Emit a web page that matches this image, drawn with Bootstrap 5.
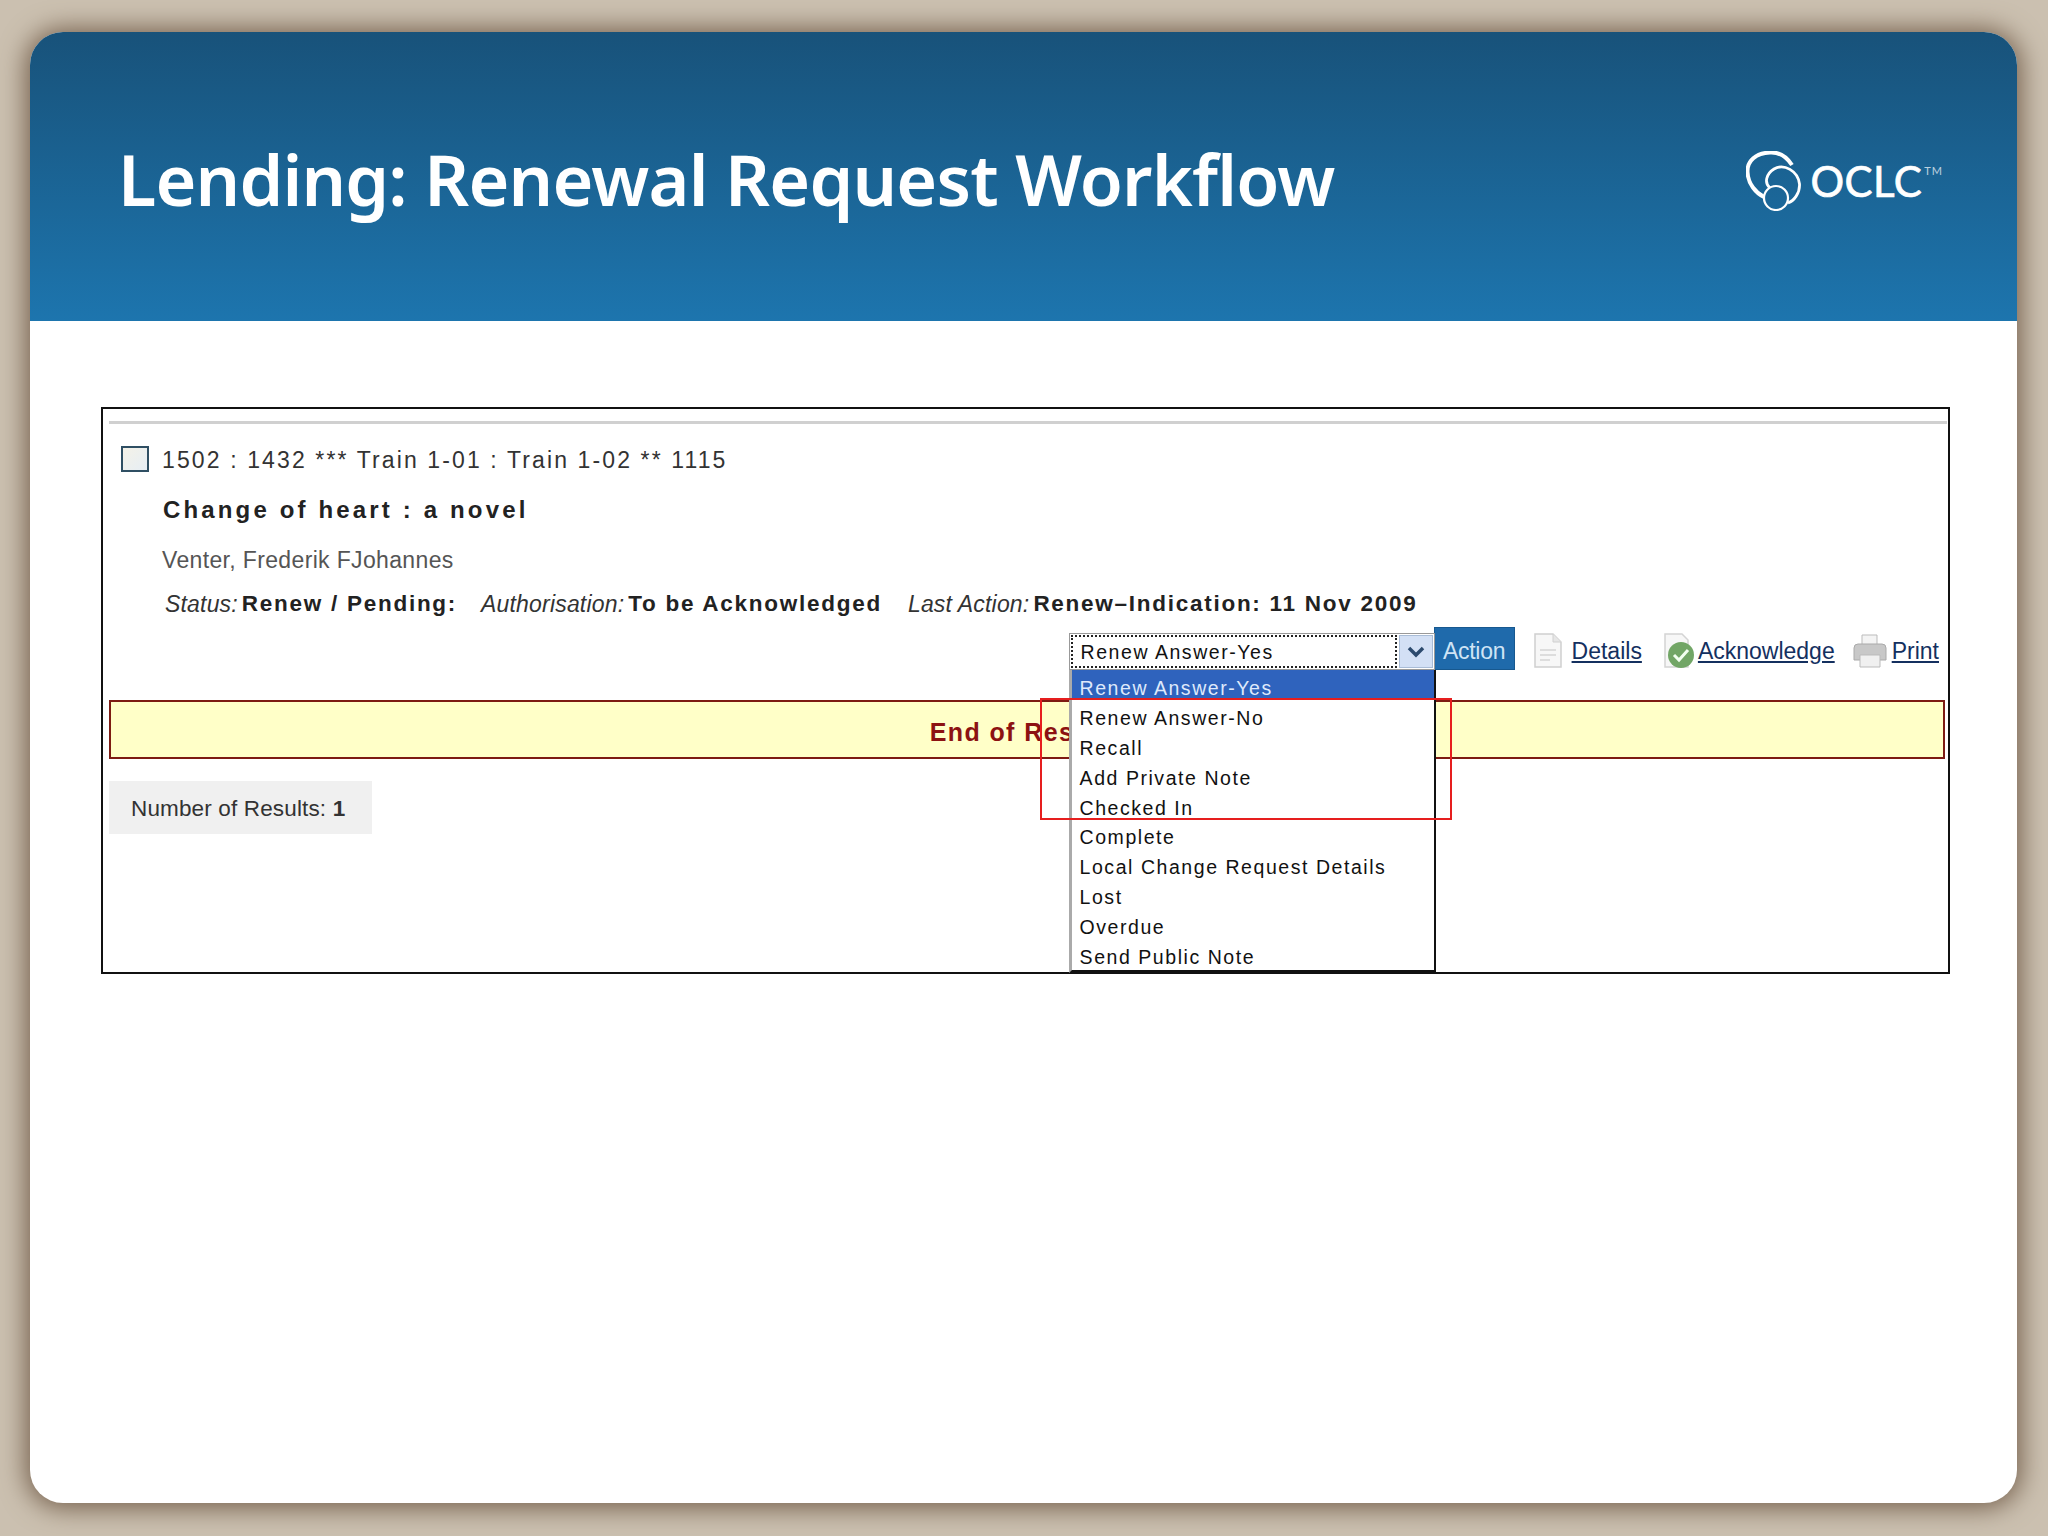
<!DOCTYPE html>
<html lang="en"><head><meta charset="utf-8"><title>Lending: Renewal Request Workflow</title>
<link rel="stylesheet" href="https://cdn.jsdelivr.net/npm/bootstrap@5.3.0/dist/css/bootstrap.min.css">
<style>
html,body{height:100%}
body{background:#cbc0b0;padding:32px 31px 33px 30px;font-family:"Liberation Sans",Arial,sans-serif;color:#222}
.slide-sheet{height:1471px;background:#fff;border-radius:33px;overflow:hidden;box-shadow:0 1px 26px 4px #75604d}
.slide-top{height:289px;background:linear-gradient(#18527a,#1d75ae);padding:0 74px 0 88px;color:#fff}
.slide-title{font-family:"Noto Sans",sans-serif;font-weight:600;font-size:70px;letter-spacing:-.8px;line-height:1;margin:0;padding-top:5px}
.logo-group{padding-top:9px}
.oclc-word{font-family:Lato,sans-serif;font-size:42px;line-height:1;letter-spacing:.5px;margin-left:8px;-webkit-text-stroke:.7px #fff}
.oclc-tm{font-family:Lato,sans-serif;font-size:11px;opacity:.7;align-self:flex-start;margin-top:12px;letter-spacing:1px;margin-left:2px}
.shot-frame{margin:86px 67px 0 71px;height:567px;border:2px solid #111;padding:0 1px 0 6px;position:relative}
.shot-rule{height:3px;background:#d0d0d0;margin-top:12px}
.req-line{font-size:23px;line-height:30px;white-space:nowrap;padding-left:54px}
.req-id{margin-top:21px;padding-left:12px;letter-spacing:2.12px;color:#333}
.req-box{width:28px;height:26px;border:2px solid #2f4f63;background:linear-gradient(135deg,#f4f2e8,#e6eef4);margin:-3px 13px 0 0}
.req-title{margin-top:20px;font-weight:700;font-size:24px;letter-spacing:3.15px}
.req-author{margin-top:20px;color:#555;letter-spacing:.35px;padding-left:53px}
.req-status{margin-top:14px;padding-left:56px;font-size:22.5px}
.req-status em{font-size:23px;letter-spacing:.18px;color:#333}
.req-status b{letter-spacing:1.73px}
.req-status .last-gap{margin-left:26px}
.act-row{margin-top:8px;height:43px;padding-right:8px}
.pick-wrap{width:366px;height:37px;margin-top:6px;border:1px solid #999;background:#fff;font-size:19.5px;letter-spacing:1.55px;line-height:30px;color:#111}
.pick-value{flex:1;margin:1px;padding-left:8px;border:2px dotted #222}
.pick-arrow{width:34px;background:#d3e0f5;border:1px solid #a9bcd6;margin:1px}
.pick-menu{--bs-dropdown-padding-y:0;--bs-dropdown-border-radius:0;--bs-dropdown-border-width:0;--bs-dropdown-min-width:0;position:absolute;top:36px;left:-1px;width:367px;height:303px;border-left:3px solid #aaa;border-right:2px solid #111;border-bottom:3px solid #111;background:#fff;font-size:19.5px;z-index:3}
.pick-menu .dropdown-item{padding:3px 0 0 8px;height:29.9px;line-height:30px;color:#111;letter-spacing:1.55px;background:transparent}
.pick-menu .dropdown-item.active{background:#2f63bd;color:#dfe9fb}
.act-btn{--bs-btn-padding-x:7px;--bs-btn-padding-y:0;--bs-btn-border-radius:0;--bs-btn-font-size:23px;--bs-btn-line-height:41px;--bs-btn-color:#cfe4f5;--bs-btn-bg:#1f6aab;--bs-btn-border-color:#17588f;letter-spacing:-.3px;width:81px;margin-left:-1px;padding-top:3px;height:43px}
.act-link{font-size:23px;line-height:30px;color:#14305f;text-decoration:underline;letter-spacing:0}
.act-icon{display:block;flex:none}
.end-band{margin-top:30px;height:59px;margin-right:2px;padding-top:6px;background:#ffffc8;border:2px solid #7d1b12;color:#8c1212;font-weight:700;font-size:25px;letter-spacing:1.4px}
.result-count{width:263px;height:53px;margin-top:22px;background:#f0f0f0;font-size:22.5px;letter-spacing:.15px;padding:2px 0 0 22px;color:#333}
.red-mark{position:absolute;left:937px;top:289px;width:412px;height:122px;border:2px solid #e61e1e;z-index:4;pointer-events:none}
</style></head><body>
<div class="slide-sheet">
  <header class="slide-top d-flex align-items-center justify-content-between">
    <h1 class="slide-title">Lending: Renewal Request Workflow</h1>
    <div class="logo-group d-flex align-items-center">
      <svg width="56" height="60" viewBox="0 0 56 60" fill="none" stroke="#fff" aria-hidden="true">
        <path d="M46 14C40 5 32 1 24 1.5 10 2 1 10 1.5 21 2 33 10 42 18 46" stroke-width="4"/>
        <path d="M24 37C18 32 20 23 28 18 38 12 52 20 53.5 33 54 42 48 50 42 52" stroke-width="2.8"/>
        <circle cx="30" cy="47" r="12" stroke-width="2.2"/>
      </svg>
      <span class="oclc-word">OCLC</span><span class="oclc-tm">TM</span>
    </div>
  </header>
  <section class="shot-frame">
    <div class="shot-rule"></div>
    <div class="req-line req-id d-flex align-items-center"><span class="req-box"></span><span>1502 : 1432 *** Train 1-01 : Train 1-02 ** 1115</span></div>
    <div class="req-line req-title">Change of heart : a novel</div>
    <div class="req-line req-author">Venter, Frederik FJohannes</div>
    <div class="req-line req-status d-flex"><em class="me-1">Status:</em><b>Renew / Pending:</b><em class="ms-4 me-1">Authorisation:</em><b>To be Acknowledged</b><em class="last-gap me-1">Last Action:</em><b>Renew–Indication: 11 Nov 2009</b></div>
    <div class="act-row d-flex justify-content-end align-items-start">
      <div class="pick-wrap position-relative d-flex">
        <span class="pick-value">Renew Answer-Yes</span>
        <span class="pick-arrow d-flex align-items-center justify-content-center"><svg width="18" height="12" viewBox="0 0 18 12" aria-hidden="true"><path d="M2 2l7 7 7-7" fill="none" stroke="#2c4a6e" stroke-width="3.5"/></svg></span>
        <div class="dropdown-menu show pick-menu">
          <a class="dropdown-item active" href="#">Renew Answer-Yes</a>
          <a class="dropdown-item" href="#">Renew Answer-No</a>
          <a class="dropdown-item" href="#">Recall</a>
          <a class="dropdown-item" href="#">Add Private Note</a>
          <a class="dropdown-item" href="#">Checked In</a>
          <a class="dropdown-item" href="#">Complete</a>
          <a class="dropdown-item" href="#">Local Change Request Details</a>
          <a class="dropdown-item" href="#">Lost</a>
          <a class="dropdown-item" href="#">Overdue</a>
          <a class="dropdown-item" href="#">Send Public Note</a>
        </div>
      </div>
      <button class="btn act-btn" type="button">Action</button>
      <div class="d-flex align-items-center" style="margin-top:6px">
        <svg class="act-icon" style="margin-left:18px" width="30" height="35" viewBox="0 0 30 35" aria-hidden="true"><path d="M2 1h18l8 8v25H2z" fill="#f7f7f7" stroke="#d0d0d0" stroke-width="1.5"/><path d="M20 1v8h8" fill="#e6e6e6" stroke="#d0d0d0"/><path d="M7 17h16M7 22h16M7 27h10" stroke="#ddd" stroke-width="2"/></svg>
        <a class="act-link" style="margin-left:9px" href="#">Details</a>
        <svg class="act-icon" style="margin-left:22px" width="31" height="35" viewBox="0 0 31 35" aria-hidden="true"><path d="M1 1h17l6 6v27H1z" fill="#f7f7f7" stroke="#d4d4d4" stroke-width="1.5"/><circle cx="17" cy="22" r="13" fill="#72a666"/><path d="M10 22l5 5 9-10" fill="none" stroke="#f2fff0" stroke-width="3"/></svg>
        <a class="act-link" style="margin-left:3px" href="#">Acknowledge</a>
        <svg class="act-icon" style="margin-left:18px" width="34" height="34" viewBox="0 0 34 34" aria-hidden="true"><path d="M9 1h15v11H9z" fill="#f4f4f4" stroke="#bbb"/><path d="M1 14q0-4 4-4h24q4 0 4 4v12H1z" fill="#c8c8c8" stroke="#aaa"/><path d="M7 21h20v12H7z" fill="#f0f0f0" stroke="#bbb"/></svg>
        <a class="act-link" style="margin-left:5px" href="#">Print</a>
      </div>
    </div>
    <div class="end-band d-flex align-items-center justify-content-center">End of Results</div>
    <div class="result-count d-flex align-items-center"><span>Number of Results:&nbsp;<b>1</b></span></div>
    <div class="red-mark"></div>
  </section>
</div>
<script src="https://cdn.jsdelivr.net/npm/bootstrap@5.3.0/dist/js/bootstrap.bundle.min.js"></script>
</body></html>
